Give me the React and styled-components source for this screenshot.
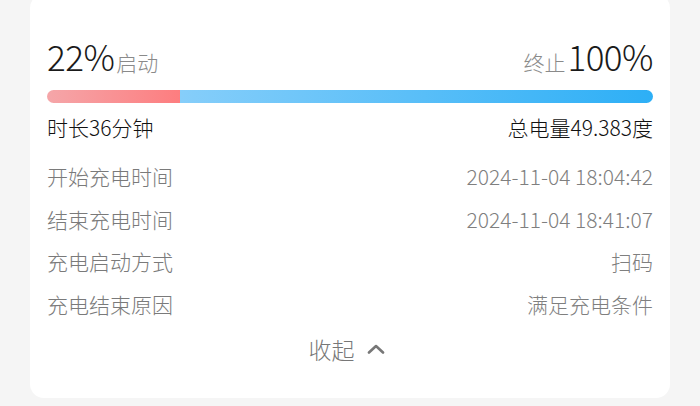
import styled, { createGlobalStyle } from "styled-components";

const GlobalStyle = createGlobalStyle`
  html, body {
    margin: 0;
    padding: 0;
    background: #f5f5f5;
  }
  body {
    font-family: "Noto Sans CJK SC", "Noto Sans", sans-serif;
    overflow: hidden;
  }
`;

const record = {
  startPct: 22,
  endPct: 100,
  duration: "时长36分钟",
  energy: "总电量49.383度",
  details: [
    { label: "开始充电时间", value: "2024-11-04 18:04:42" },
    { label: "结束充电时间", value: "2024-11-04 18:41:07" },
    { label: "充电启动方式", value: "扫码" },
    { label: "充电结束原因", value: "满足充电条件" },
  ],
};

export default function App() {
  return (
    <>
      <GlobalStyle />
      <Card>
        <Header>
          <Side>
            <Big>{record.startPct}%</Big>
            <Tag>启动</Tag>
          </Side>
          <Side>
            <Tag>终止</Tag>
            <Big>{record.endPct}%</Big>
          </Side>
        </Header>

        <Bar>
          <Start style={{ width: record.startPct + "%" }} />
          <Rest />
        </Bar>

        <Summary>
          <span>{record.duration}</span>
          <span>{record.energy}</span>
        </Summary>

        <Details>
          {record.details.map((d) => (
            <Row key={d.label}>
              <Label>{d.label}</Label>
              <Value>{d.value}</Value>
            </Row>
          ))}
        </Details>

        <Toggle>
          收起
          <svg width="18" height="10" viewBox="0 0 18 10">
            <polyline
              points="2,8.5 9,2 16,8.5"
              fill="none"
              stroke="#777"
              strokeWidth="2.6"
              strokeLinecap="round"
              strokeLinejoin="round"
            />
          </svg>
        </Toggle>
      </Card>
    </>
  );
}

const Card = styled.div`
  margin: -6px 30px 0;
  padding: 42px 17px 29px;
  background: #fff;
  border-radius: 14px;
`;

const Header = styled.div`
  display: flex;
  justify-content: space-between;
  align-items: baseline;
  height: 40px;
`;

const Side = styled.div`
  display: flex;
  align-items: baseline;
  gap: 2px;
`;

const Big = styled.span`
  font-size: 35px;
  font-weight: 300;
  line-height: 40px;
  color: #1a1a1a;
  letter-spacing: -0.5px;
`;

const Tag = styled.span`
  font-size: 21px;
  font-weight: 300;
  line-height: 40px;
  color: #8a8a8a;
`;

const Bar = styled.div`
  display: flex;
  height: 13px;
  margin-top: 14px;
  border-radius: 7px;
  overflow: hidden;
`;

const Start = styled.div`
  background: linear-gradient(90deg, #f5a6a9, #fd7d7f);
`;

const Rest = styled.div`
  flex: 1;
  background: linear-gradient(90deg, #86cefa, #2daff6);
`;

const Summary = styled.div`
  display: flex;
  justify-content: space-between;
  margin-top: 10px;
  font-size: 21px;
  font-weight: 300;
  line-height: 28px;
  color: #111;
`;

const Details = styled.div`
  margin-top: 14px;
`;

const Row = styled.div`
  display: flex;
  justify-content: space-between;
  align-items: center;
  height: 42.5px;
  font-size: 21px;
  font-weight: 300;
`;

const Label = styled.span`
  color: #7a7a7a;
`;

const Value = styled.span`
  color: #7f7f7f;
`;

const Toggle = styled.div`
  display: flex;
  justify-content: center;
  align-items: center;
  gap: 12px;
  margin-top: 4px;
  padding-right: 7px;
  height: 40px;
  font-size: 23px;
  font-weight: 300;
  color: #777;
`;
